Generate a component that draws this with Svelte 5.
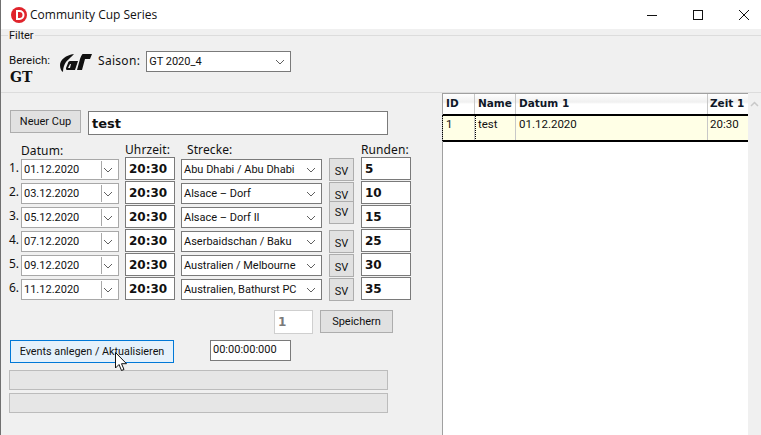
<script>
  const rows = [
    { n: 1, date: "01.12.2020", track: "Abu Dhabi / Abu Dhabi", laps: "5" },
    { n: 2, date: "03.12.2020", track: "Alsace – Dorf", laps: "10" },
    { n: 3, date: "05.12.2020", track: "Alsace – Dorf II", laps: "15", raised: true },
    { n: 4, date: "07.12.2020", track: "Aserbaidschan / Baku", laps: "25" },
    { n: 5, date: "09.12.2020", track: "Australien / Melbourne", laps: "30" },
    { n: 6, date: "11.12.2020", track: "Australien, Bathurst PC", laps: "35" }
  ]
</script>

{#snippet chevron()}
  <svg class="chev" width="10" height="6" viewBox="0 0 10 6"><path d="M1 1l4 4 4-4" fill="none" stroke="#606060" stroke-width="1"/></svg>
{/snippet}

<div class="window">
  <header class="titlebar">
    <svg width="20" height="20" viewBox="0 0 20 20" class="appicon">
      <circle cx="10" cy="10" r="8" fill="#e0242c"/>
      <path d="M7 5h3.500a5 5 0 0 1 0 10H7zM9 7v6h1.500a3 3 0 0 0 0-6z" fill="#fff" fill-rule="evenodd"/>
    </svg>
    <span class="apptitle">Community Cup Series</span>
    <div class="winbtns">
      <svg width="12" height="12" viewBox="0 0 12 12"><path d="M1 6.500h10" stroke="#111" fill="none"/></svg>
      <svg width="12" height="12" viewBox="0 0 12 12"><rect x="1.500" y="1.500" width="9" height="9" stroke="#111" fill="none"/></svg>
      <svg width="12" height="12" viewBox="0 0 12 12"><path d="M1 1l10 10M11 1L1 11" stroke="#111" fill="none"/></svg>
    </div>
  </header>

  <section class="filter">
    <span class="legend">Filter</span>
    <div class="bereich">
      <span class="small">Bereich:</span>
      <b class="gt">GT</b>
    </div>
    <svg class="logo" width="32" height="20" viewBox="0 0 32 20">
      <path d="M14 1C6 2 0 7 0 12c0 3 1 6 3 7 0-5 2-10 6-13 2-2 4-4 5-5z" fill="#111"/>
      <path d="M10 8h8l-3 9H7c-1 0-1-1-1-2l2-5c0-1 1-2 2-2zm0 3l-2 4h2l1-4z" fill="#111" fill-rule="evenodd"/>
      <path d="M23 1h9l-2 5h-5l-3 11h-5l3-11c1-3 2-5 3-5z" fill="#111"/>
    </svg>
    <span class="saison">Saison:</span>
    <div class="select season">GT 2020_4 {@render chevron()}</div>
  </section>

  <div class="panes">
    <main class="left">
      <div class="cup">
        <button class="btn newcup">Neuer Cup</button>
        <div class="field cupname">test</div>
      </div>

      <div class="heads">
        <span class="h-date">Datum:</span>
        <span class="h-time">Uhrzeit:</span>
        <span class="h-track">Strecke:</span>
        <span class="h-laps">Runden:</span>
      </div>

      <div class="rows">
        {#each rows as r}
          <div class="row">
            <span class="num">{r.n}.</span>
            <div class="date"><span>{r.date}</span><i class="sep"></i>{@render chevron()}</div>
            <div class="field time">20:30</div>
            <div class="select track">{r.track} {@render chevron()}</div>
            <button class="btn sv" class:raised={r.raised}>SV</button>
            <div class="field laps">{r.laps}</div>
          </div>
        {/each}
      </div>

      <div class="save">
        <div class="idx">1</div>
        <button class="btn speichern">Speichern</button>
      </div>

      <div class="events">
        <button class="btn create">Events anlegen / Aktualisieren</button>
        <div class="timer">00:00:00:000</div>
        <svg class="cursor" width="14" height="21" viewBox="0 0 14 21"><path d="M.5.500v15.500l3.500-3.500 2.500 6 2.500-1-2.500-5.800h5z" fill="#fff" stroke="#111"/></svg>
      </div>

      <div class="progress"></div>
      <div class="progress"></div>
    </main>

    <aside class="right">
      <div class="grid">
        <div class="thead">
          <span class="c-id">ID</span><span class="c-name">Name</span><span class="c-date">Datum 1</span><span class="c-time">Zeit 1</span>
        </div>
        <div class="trow">
          <span class="c-id focus">1</span><span class="c-name">test</span><span class="c-date">01.12.2020</span><span class="c-time">20:30</span>
        </div>
      </div>
      <div class="scroll"><svg width="9" height="6" viewBox="0 0 9 6"><path d="M1 5l3.500-3.500L8 5" fill="none" stroke="#c8c8c8" stroke-width="1.500"/></svg></div>
    </aside>
  </div>
</div>

<style>
  :global(body) { margin: 0; background: #f0f0f0; }

  .window {
    width: 761px;
    height: 435px;
    overflow: hidden;
    box-sizing: border-box;
    border-left: 1px solid #707070;
    display: flex;
    flex-direction: column;
    font-family: Roboto, sans-serif;
    font-size: 11px;
    color: #111;
    background: #f0f0f0;
  }

  .titlebar {
    height: 29px;
    flex: none;
    background: #fff;
    display: flex;
    align-items: center;
    padding-left: 8px;
  }
  .apptitle { font-size: 12px; margin-left: 1px; font-family: "Open Sans", sans-serif; }
  .winbtns { margin-left: auto; display: flex; gap: 34px; margin-right: 11px; }

  .filter {
    position: relative;
    height: 58px;
    flex: none;
    margin-top: 6px;
    border-top: 1px solid #dcdcdc;
    border-bottom: 1px solid #dcdcdc;
    display: flex;
    align-items: flex-start;
    padding: 16px 0 0 8px;
    box-sizing: border-box;
  }
  .legend { position: absolute; left: 7px; top: -7px; background: #f0f0f0; padding: 0 1px; line-height: 13px; }
  .bereich { display: flex; flex-direction: column; width: 51px; }
  .small { line-height: 15px; margin-top: 1px; font-size: 11.500px; }
  .gt { font-family: "DejaVu Serif", serif; font-size: 14px; line-height: 14px; margin-top: 2px; margin-left: 1px; }
  .logo { margin-top: 1px; }
  .saison { font-family: "Noto Sans", sans-serif; font-size: 12px; margin-left: 6px; line-height: 17px; letter-spacing: .3px; }
  .select {
    position: relative;
    background: #fff;
    border: 1px solid #7a7a7a;
    box-sizing: border-box;
    padding-left: 2px;
    display: flex;
    align-items: center;
    white-space: nowrap;
  }
  .chev { position: absolute; right: 5px; top: 50%; margin-top: -3px; }
  .season { width: 145px; height: 21px; margin-left: 6px; margin-top: -1px; }

  .panes { flex: 1; display: flex; min-height: 0; }
  .left { width: 441px; flex: none; box-sizing: border-box; padding: 17px 0 0 8px; position: relative; }
  .right { flex: 1; display: flex; border-left: 1px solid #a0a0a0; background: #fff; }

  .btn {
    font: inherit;
    color: inherit;
    background: #e1e1e1;
    border: 1px solid #adadad;
    padding: 0;
    box-sizing: border-box;
  }
  .field {
    background: #fff;
    border: 1px solid #7a7a7a;
    box-sizing: border-box;
    font-family: "DejaVu Sans", sans-serif;
    font-weight: 700;
    font-size: 12px;
    display: flex;
    align-items: center;
    padding-left: 3px;
  }

  .cup { display: flex; align-items: flex-start; gap: 7px; margin-left: 1px; }
  .newcup { width: 71px; height: 23px; }
  .cupname { width: 300px; height: 24px; font-size: 13px; margin-top: 1px; }

  .heads {
    position: relative;
    height: 16px;
    margin-top: 6px;
    font-family: "Noto Sans", sans-serif;
    font-size: 12px;
    letter-spacing: .1px;
  }
  .heads span { position: absolute; top: 0; line-height: 17px; }
  .heads .h-date { left: 12px; top: 1px; }
  .h-time { left: 116px; }
  .h-track { left: 178px; }
  .h-laps { left: 352px; }

  .rows { display: flex; flex-direction: column; }
  .row { height: 24px; display: flex; align-items: flex-start; }
  .num { width: 12px; font-family: "Noto Sans", sans-serif; font-size: 12px; line-height: 22px; }
  .date {
    position: relative;
    width: 98px;
    height: 21px;
    margin-top: 2px;
    background: #fff;
    border: 1px solid #a8a8a8;
    box-sizing: border-box;
    padding-left: 2px;
    display: flex;
    align-items: center;
  }
  .sep { position: absolute; right: 16px; top: 1px; bottom: 1px; width: 1px; background: #a8a8a8; }
  .time { width: 50px; height: 23px; margin-left: 6px; }
  .track { width: 141px; height: 21px; margin: 2px 0 0 6px; }
  .sv { width: 25px; height: 23px; margin: 1px 0 0 7px; position: relative; padding-top: 3px; }
  .sv.raised { top: -5px; z-index: 1; padding-top: 0; }
  .laps { width: 50px; height: 23px; margin-left: 7px; }

  .save { display: flex; gap: 7px; margin: 9px 0 0 265px; align-items: flex-start; }
  .idx {
    width: 39px; height: 24px;
    background: #fff;
    border: 1px solid #cfcfcf;
    box-sizing: border-box;
    font-family: "DejaVu Sans", sans-serif;
    font-weight: 700;
    font-size: 12px;
    color: #7a7a7a;
    padding-left: 3px;
    line-height: 22px;
  }
  .speichern { width: 73px; height: 23px; }

  .events { position: relative; display: flex; align-items: flex-start; margin: 6px 0 0 1px; height: 30px; }
  .create { width: 164px; height: 23px; background: #e5f1fb; border-color: #0078d7; font-size: 10.800px; }
  .timer {
    width: 81px; height: 21px;
    margin-left: 36px;
    background: #fff;
    border: 1px solid #7a7a7a;
    box-sizing: border-box;
    padding-left: 2px;
    line-height: 18px;
  }
  .cursor { position: absolute; left: 105px; top: 12px; }

  .progress {
    width: 379px;
    height: 20px;
    box-sizing: border-box;
    background: #e6e6e6;
    border: 1px solid #bcbcbc;
    margin-bottom: 3px;
  }

  .grid { flex: 1; min-width: 0; }
  .thead {
    height: 21px;
    display: flex;
    box-sizing: border-box;
    border-top: 1px solid #a0a0a0;
    background: linear-gradient(#fff, #f0f0f0 40%, #fff 50%);
    font-family: "DejaVu Sans", sans-serif;
    font-weight: 700;
    font-size: 10.500px;
    color: #101828;
  }
  .thead span, .trow span { box-sizing: border-box; padding-left: 3px; border-right: 1px solid #c8c8c8; line-height: 19px; }
  .trow span { line-height: 17px; }
  .c-id { width: 32px; }
  .c-name { width: 41px; }
  .c-date { width: 192px; }
  .thead .c-time, .trow .c-time { flex: 1; border-right: 0; padding-left: 2px; }
  .trow {
    height: 28px;
    display: flex;
    background: #ffffe6;
    border-top: 2px solid #000;
    border-bottom: 2px solid #000;
    box-sizing: border-box;
    font-size: 11.500px;
  }
  .focus { outline: 1px dotted #000; }
  .scroll { width: 13px; background: #f0f0f0; display: flex; justify-content: center; padding-top: 8px; box-sizing: border-box; align-items: flex-start; }
</style>
